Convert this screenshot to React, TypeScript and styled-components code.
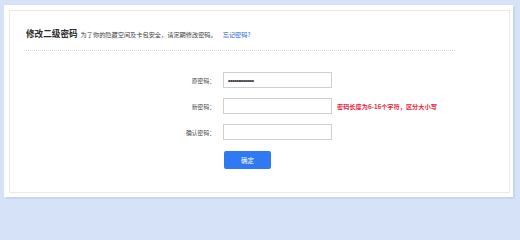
import React from "react";
import styled, { createGlobalStyle } from "styled-components";

const Global = createGlobalStyle`
  html, body { margin: 0; padding: 0; }
  body {
    background: #d5e2f8;
    font-family: "Noto Sans CJK SC", "Noto Sans", sans-serif;
    width: 520px;
    height: 204px;
    overflow: hidden;
  }
`;

const Frame = styled.div`
  box-sizing: border-box;
  width: 520px;
  height: 204px;
  padding: 5px 7px 7px 4px;
`;

const Panel = styled.div`
  box-sizing: border-box;
  height: 100%;
  background: #fff;
  padding: 5px 3px 4px 5px;
  box-shadow: 2px 2px 0 #c6d6f1;
`;

const Inner = styled.div`
  box-sizing: border-box;
  height: 100%;
  border: 1px solid #efe9e4;
`;

const Header = styled.div`
  display: flex;
  align-items: baseline;
  padding: 16px 0 0 16px;
  height: 12px;
  line-height: 12px;
`;

const Title = styled.h2`
  margin: 0 3px 0 0;
  font-size: 8.6px;
  font-weight: 700;
  color: #2a2a2a;
`;

const Sub = styled.span`
  font-size: 6.2px;
  color: #3c3c3c;
`;

const Link = styled.a`
  margin-left: 6px;
  font-size: 6.2px;
  color: #2566d3;
  text-decoration: none;
`;

const Divider = styled.div`
  margin: 11px 0 0 14px;
  width: 431px;
  border-top: 1px dotted #d6d6d6;
`;

const Form = styled.form`
  margin: 21px 0 0 0;
  display: flex;
  flex-direction: column;
  gap: 10px;
`;

const Row = styled.div`
  display: grid;
  grid-template-columns: 205px 109px auto;
  column-gap: 8px;
  align-items: center;
  height: 16px;
`;

const Label = styled.label`
  text-align: right;
  font-size: 5.8px;
  color: #444;
`;

const Input = styled.input`
  box-sizing: border-box;
  width: 109px;
  height: 16px;
  border: 1px solid #cfcfcf;
  padding: 0 4px;
  font-size: 6.5px;
  color: #1a1a1a;
  outline: none;
  letter-spacing: -0.3px;
`;

const Hint = styled.span`
  margin-left: -3px;
  font-size: 6.2px;
  font-weight: 700;
  color: #e8243c;
`;

const ButtonRow = styled.div`
  display: flex;
  margin-top: 1px;
  padding-left: 214px;
`;

const Submit = styled.button`
  width: 47px;
  height: 18px;
  border: none;
  border-radius: 2px;
  background: #2f7af4;
  color: #fff;
  font-family: inherit;
  font-size: 6.5px;
  padding: 0;
  cursor: pointer;
`;

export default function App() {
  return (
    <>
      <Global />
      <Frame>
        <Panel>
          <Inner>
            <Header>
              <Title>修改二级密码</Title>
              <Sub>为了你的隐藏空间及卡包安全，请定期修改密码。</Sub>
              <Link href="#">忘记密码?</Link>
            </Header>
            <Divider />
            <Form onSubmit={(e) => e.preventDefault()}>
              <Row>
                <Label>原密码：</Label>
                <Input type="password" defaultValue="1234567890123" />
              </Row>
              <Row>
                <Label>新密码：</Label>
                <Input type="password" />
                <Hint>密码长度为6-16个字符，区分大小写</Hint>
              </Row>
              <Row>
                <Label>确认密码：</Label>
                <Input type="password" />
              </Row>
              <ButtonRow>
                <Submit type="submit">确定</Submit>
              </ButtonRow>
            </Form>
          </Inner>
        </Panel>
      </Frame>
    </>
  );
}
